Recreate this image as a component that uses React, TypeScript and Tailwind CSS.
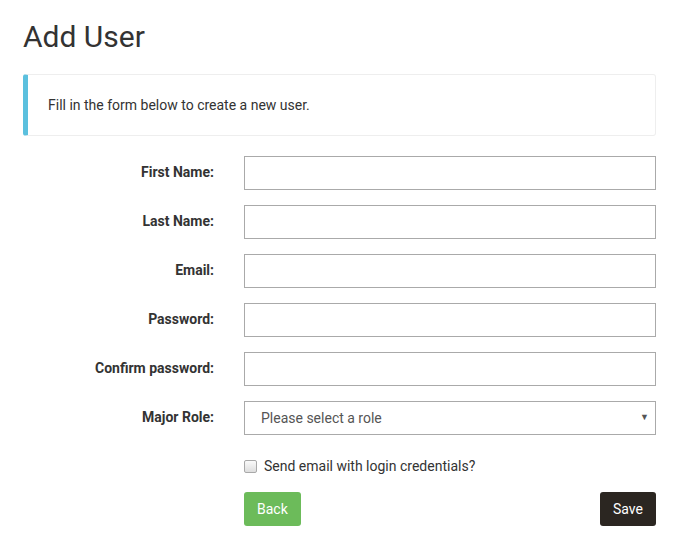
import { useState } from "react";

const fields = [
  { id: "firstName", label: "First Name:", type: "text" },
  { id: "lastName", label: "Last Name:", type: "text" },
  { id: "email", label: "Email:", type: "email" },
  { id: "password", label: "Password:", type: "password" },
  { id: "confirm", label: "Confirm password:", type: "password" },
];

export default function App() {
  const [sendEmail, setSendEmail] = useState(false);

  return (
    <div className="min-h-[546px] bg-white pl-[23px] pr-[20px] pt-[20px] font-['Roboto',sans-serif] text-[#333]">
      <h1 className="text-[30px] leading-[33px] font-normal text-[#333]">Add User</h1>

      <div className="mt-[21px] rounded-[3px] border border-[#eee] border-l-[5px] border-l-[#5bc0de] px-[20px] py-[19px]">
        <p className="text-[14px] leading-[22px]">Fill in the form below to create a new user.</p>
      </div>

      <form className="mt-[20px] flex flex-col gap-[15px]">
        {fields.map((f) => (
          <div key={f.id} className="flex items-center">
            <label htmlFor={f.id} className="w-[191px] pb-[2px] text-right text-[14px] leading-[18px] font-bold">
              {f.label}
            </label>
            <input
              id={f.id}
              type={f.type}
              className="ml-[30px] h-[34px] flex-1 border border-[#aaa] bg-white px-3 text-[14px] outline-none"
            />
          </div>
        ))}

        <div className="flex items-center">
          <label htmlFor="role" className="w-[191px] pb-[2px] text-right text-[14px] leading-[18px] font-bold">
            Major Role:
          </label>
          <div className="relative ml-[30px] flex-1">
            <select
              id="role"
              className="h-[34px] w-full appearance-none border border-[#aaa] bg-white pl-[16px] text-[14px] text-[#555] outline-none"
            >
              <option>Please select a role</option>
            </select>
            <span className="pointer-events-none absolute right-[7px] top-[10px] text-[9px] text-[#555]">▼</span>
          </div>
        </div>
      </form>

      <div className="ml-[221px] mt-[21px] flex items-center">
        <input
          type="checkbox"
          checked={sendEmail}
          onChange={(e) => setSendEmail(e.target.checked)}
          className="m-0 h-[13px] w-[13px] appearance-none rounded-[2px] border border-[#a9a9a9] bg-gradient-to-b from-[#fafafa] to-[#dedede] checked:bg-[#3b82f6]"
        />
        <span className="ml-[7px] text-[14px]">Send email with login credentials?</span>
      </div>

      <div className="ml-[221px] mt-[15px] flex justify-between">
        <button className="h-[34px] rounded-[3px] bg-[#6cbb5a] px-[13px] text-[14px] text-white">Back</button>
        <button className="h-[34px] rounded-[3px] bg-[#2b2621] px-[13px] text-[14px] text-white">Save</button>
      </div>
    </div>
  );
}
